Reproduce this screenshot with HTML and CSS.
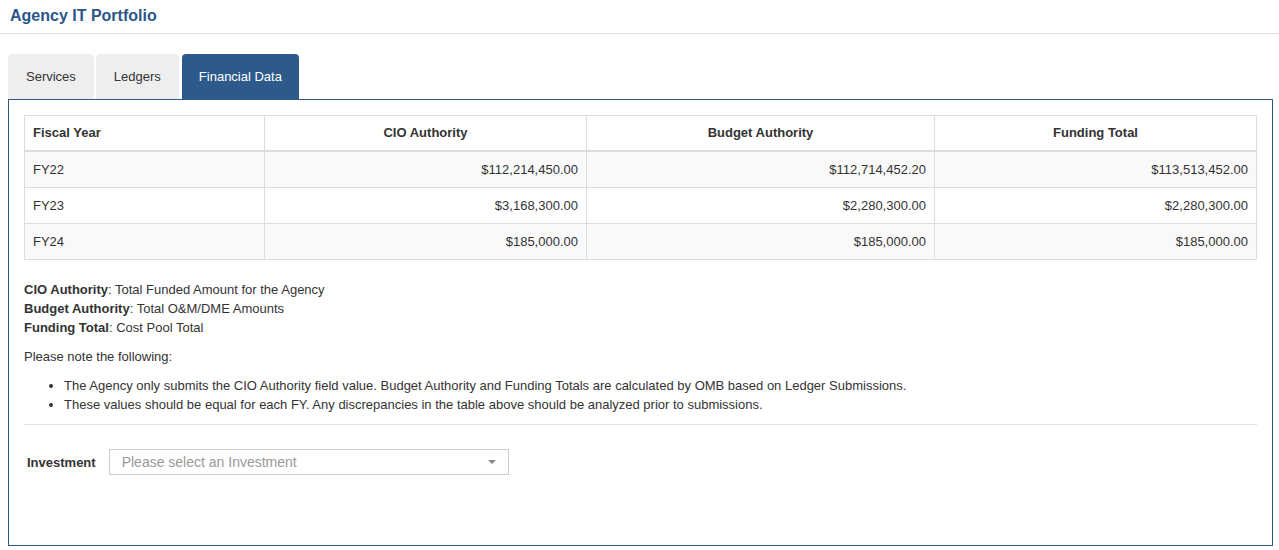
FILE: index.html
```html
<!DOCTYPE html>
<html lang="en">
<head>
    <meta charset="UTF-8">
    <meta name="viewport" content="width=device-width, initial-scale=1.0">
    <title>Agency IT Portfolio</title>
    <link rel="stylesheet" href="styles.css">
</head>
<body>
    <div class="cabecalho">
        <h1 class="titulo">Agency IT Portfolio</h1>
    </div>
    <div class="abas">
        <div class="aba">Services</div>
        <div class="aba">Ledgers</div>
        <div class="aba ativa">Financial Data</div>
    </div>
    <div class="painel">
        <table class="tabela">
            <thead>
                <tr>
                    <th class="colAno">Fiscal Year</th>
                    <th class="colCio">CIO Authority</th>
                    <th class="colBudget">Budget Authority</th>
                    <th class="colTotal">Funding Total</th>
                </tr>
            </thead>
            <tbody>
                <tr>
                    <td>FY22</td>
                    <td class="valor">$112,214,450.00</td>
                    <td class="valor">$112,714,452.20</td>
                    <td class="valor">$113,513,452.00</td>
                </tr>
                <tr>
                    <td>FY23</td>
                    <td class="valor">$3,168,300.00</td>
                    <td class="valor">$2,280,300.00</td>
                    <td class="valor">$2,280,300.00</td>
                </tr>
                <tr>
                    <td>FY24</td>
                    <td class="valor">$185,000.00</td>
                    <td class="valor">$185,000.00</td>
                    <td class="valor">$185,000.00</td>
                </tr>
            </tbody>
        </table>

        <div class="legenda">
            <b>CIO Authority</b>: Total Funded Amount for the Agency<br>
            <b>Budget Authority</b>: Total O&amp;M/DME Amounts<br>
            <b>Funding Total</b>: Cost Pool Total
        </div>
        <p class="nota">Please note the following:</p>
        <ul class="lista">
            <li>The Agency only submits the CIO Authority field value. Budget Authority and Funding Totals are calculated by OMB based on Ledger Submissions.</li>
            <li>These values should be equal for each FY. Any discrepancies in the table above should be analyzed prior to submissions.</li>
        </ul>
        <hr class="divisor">

        <div class="linhaInvest">
            <label class="rotulo">Investment</label>
            <div class="seletor">
                <span class="placeholder">Please select an Investment</span>
                <span class="seta"></span>
            </div>
        </div>
    </div>
</body>
</html>
```

FILE: styles.css
```css
body
{
    margin: 0;
    font-family: "Liberation Sans", Arial, sans-serif;
    font-size: 13px;
    line-height: 19px;
    color: #333;
    background: #fff;
}

.cabecalho
{
    height: 34px;
    border-bottom: 1px solid #dedede;
    padding: 0 10px;
    box-sizing: border-box;
}

.titulo
{
    margin: 0;
    font-size: 16px;
    line-height: 31px;
    font-weight: bold;
    color: #2c5687;
}

.abas
{
    display: flex;
    gap: 2px;
    margin-top: 20px;
    padding-left: 8px;
}

.aba
{
    height: 45px;
    line-height: 45px;
    padding: 0 18px;
    background: #eeeeee;
    border-radius: 4px 4px 0 0;
    color: #333;
}

.ativa
{
    background: #2d5a8a;
    color: #fff;
    margin-left: 1px;
    padding: 0 17px;
}

.painel
{
    margin: 0 6px 0 8px;
    border: 1px solid #2d5a8a;
    padding: 15px 15px 70px 15px;
}

.tabela
{
    width: 100%;
    border-collapse: collapse;
    table-layout: fixed;
}

.tabela th,
.tabela td
{
    border: 1px solid #dddddd;
    padding: 8px 8px;
    text-align: left;
}

.tabela th
{
    border-bottom: 2px solid #dddddd;
    padding-top: 7px;
    padding-bottom: 8px;
    font-weight: bold;
    text-align: center;
}

.tabela th.colAno
{
    text-align: left;
}

.colAno { width: 223px; }
.colCio { width: 305px; }
.colBudget { width: 331px; }

.tabela tbody tr:nth-child(odd)
{
    background: #f9f9f9;
}

.tabela td.valor
{
    text-align: right;
}

.legenda
{
    margin-top: 20px;
}

.nota
{
    margin: 10px 0 10px 0;
}

.lista
{
    margin: 0 0 10px 0;
    padding-left: 40px;
}

.divisor
{
    border: 0;
    border-top: 1px solid #e0e0e0;
    margin: 0 0 24px 0;
}

.linhaInvest
{
    display: flex;
    align-items: center;
    gap: 13px;
    padding-left: 3px;
}

.rotulo
{
    font-weight: bold;
}

.seletor
{
    width: 400px;
    height: 26px;
    box-sizing: border-box;
    border: 1px solid #cccccc;
    display: flex;
    align-items: center;
    justify-content: space-between;
    padding: 0 12px;
    background: #fff;
}

.placeholder
{
    color: #999;
    font-size: 14px;
}

.seta
{
    width: 0;
    height: 0;
    border-left: 4px solid transparent;
    border-right: 4px solid transparent;
    border-top: 4px solid #888;
}
```
